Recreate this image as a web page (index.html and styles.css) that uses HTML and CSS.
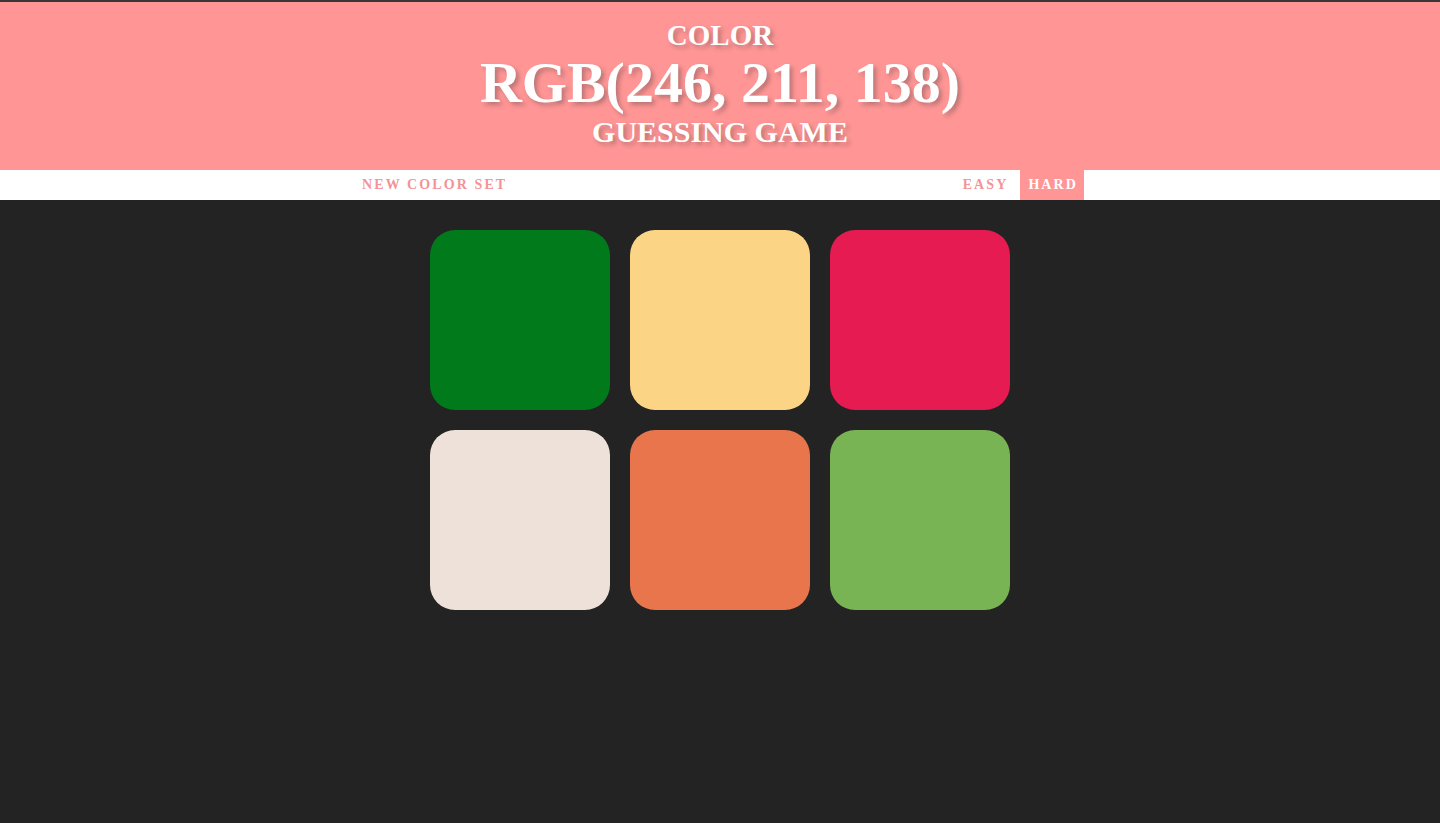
FILE: index.html
```html
<!DOCTYPE html>
<html>
<head>
<meta charset="utf-8">
<link rel="stylesheet" href="styles.css">
</head>
<body>
<header class="hero">
  <div class="hero-line hero-small">COLOR</div>
  <div class="hero-line hero-big">RGB(246, 211, 138)</div>
  <div class="hero-line hero-mid">GUESSING GAME</div>
</header>
<nav class="bar">
  <div class="bar-inner">
    <button class="btn">NEW COLOR SET</button>
    <div class="modes">
      <button class="btn">EASY</button>
      <button class="btn selected">HARD</button>
    </div>
  </div>
</nav>
<main class="board">
  <div class="square" style="background:#007a1a"></div>
  <div class="square" style="background:#fbd486"></div>
  <div class="square" style="background:#e51b52"></div>
  <div class="square" style="background:#ede1d9"></div>
  <div class="square" style="background:#e8754b"></div>
  <div class="square" style="background:#78b354"></div>
</main>
</body>
</html>
```
FILE: styles.css
```css
html, body {
  margin: 0;
  padding: 0;
  height: 100%;
}
body {
  background: #232323;
  border-top: 2px solid #3a3536;
  font-family: "Liberation Serif", "DejaVu Serif", serif;
  box-sizing: border-box;
}
.hero {
  background: #ff9595;
  color: #fff;
  text-align: center;
  height: 168px;
  display: flex;
  flex-direction: column;
  align-items: center;
  padding-top: 16px;
  box-sizing: border-box;
  font-weight: bold;
  text-shadow: 3px 3px 4px rgba(90, 70, 70, 0.4);
}
.hero-small {
  font-size: 29px;
  line-height: 34px;
}
.hero-big {
  font-size: 58px;
  line-height: 61px;
}
.hero-mid {
  font-size: 30px;
  line-height: 38px;
}
.bar {
  background: #fff;
  height: 30px;
}
.bar-inner {
  width: 728px;
  margin: 0 auto;
  height: 100%;
  display: flex;
  justify-content: space-between;
  align-items: stretch;
}
.modes {
  display: flex;
}
.btn {
  border: none;
  background: #fff;
  color: #f39396;
  font-family: "Liberation Serif", "DejaVu Serif", serif;
  font-weight: bold;
  font-size: 14px;
  letter-spacing: 2.1px;
  padding: 0 6px;
  height: 30px;
  cursor: pointer;
}
.btn.selected {
  background: #ff9595;
  color: #fff;
  padding: 0 6px 0 8px;
  margin-left: 6px;
}
.board {
  width: 600px;
  margin: 20px auto 0;
  display: grid;
  grid-template-columns: repeat(3, 180px);
  gap: 20px;
  padding: 10px;
  box-sizing: border-box;
}
.square {
  width: 180px;
  height: 180px;
  border-radius: 25px;
}
```
